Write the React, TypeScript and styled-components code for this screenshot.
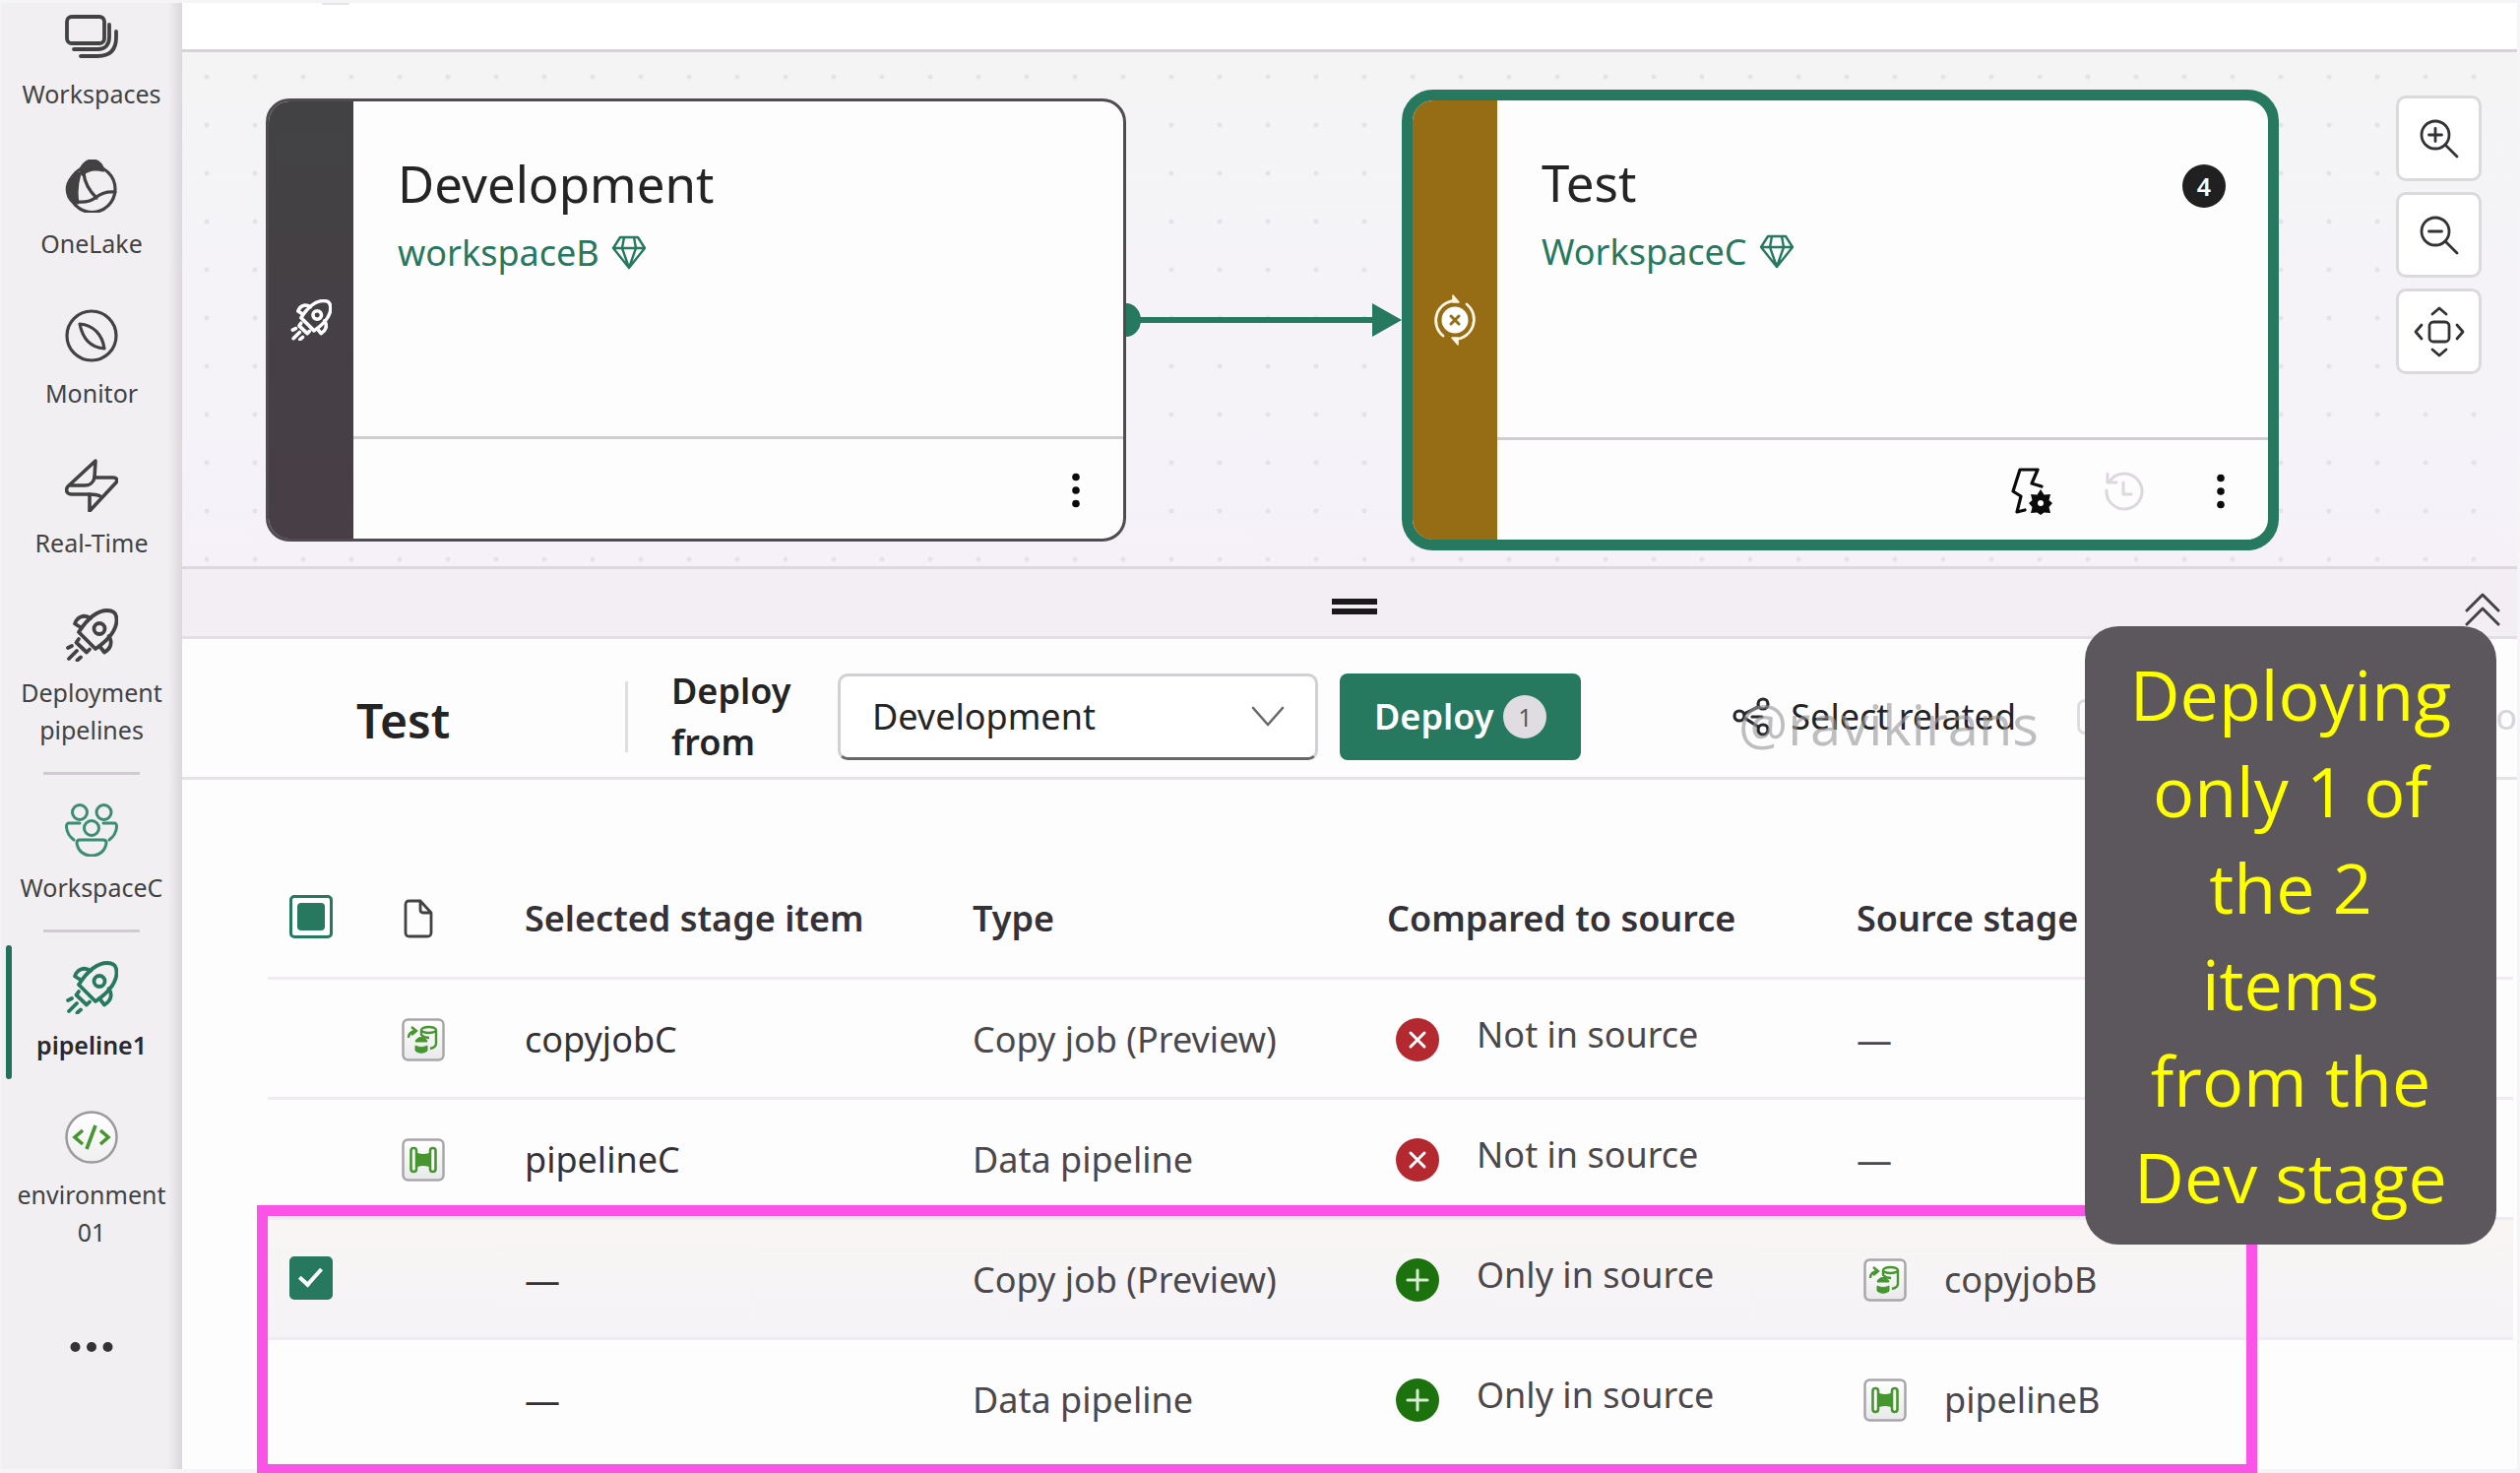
import React, { useState } from "react";
import styled, { createGlobalStyle, css } from "styled-components";

const color = {
  green: "#26785f",
  greenDark: "#1f7159",
  text: "#242424",
  textSoft: "#4b484c",
  line: "#dcd8de",
  rowLine: "#efebf0",
  rail: "#f1eff2",
  strip: "#f5f4f6",
};

const GlobalStyle = createGlobalStyle`
  *, *::before, *::after { box-sizing: border-box; }
  body {
    margin: 0;
    background: ${color.strip};
    color: ${color.text};
    font-family: "Noto Sans", "Open Sans", sans-serif;
  }
  button, select, input { font: inherit; color: inherit; margin: 0; }
  button { cursor: pointer; }
  svg { display: block; flex: none; }
`;

/* ---------- Shell ---------- */

const Shell = styled.div`
  position: relative;
  display: flex;
  min-height: 100vh;
  padding: 3px 3px 4px 1px;
`;

const Rail = styled.nav`
  flex: none;
  width: 184px;
  background: linear-gradient(to right, transparent 170px, #dbd7dc 184px), ${color.rail};
`;

const RailLink = styled.a<{ $first?: boolean; $active?: boolean }>`
  position: relative;
  display: flex;
  flex-direction: column;
  align-items: center;
  gap: 12px;
  padding: ${(p) => (p.$first ? "7px" : "24px")} 15px 24px;
  color: ${(p) => (p.$active ? "#2a282c" : "#424242")};
  font-size: 25px;
  line-height: 38px;
  font-weight: ${(p) => (p.$active ? 600 : 400)};
  text-align: center;
  text-decoration: none;

  ${(p) =>
    p.$active &&
    css`
      &::before {
        content: "";
        position: absolute;
        left: 5px;
        top: 8px;
        bottom: 8px;
        width: 6px;
        border-radius: 3px;
        background: ${color.greenDark};
      }
    `}
`;

const RailLabel = styled.span`
  white-space: pre-line;
`;

const RailDivider = styled.hr`
  width: 98px;
  height: 3px;
  margin: 0 43px 5px;
  border: 0;
  background: #cfcbd0;
`;

const RailMore = styled.button`
  display: flex;
  justify-content: center;
  width: 100%;
  margin-top: 60px;
  padding: 8px 0;
  border: 0;
  background: none;
`;

const Main = styled.main`
  flex: 1;
  min-width: 0;
  background: #fefdfe;
`;

const TopBar = styled.header`
  height: 50px;
  padding-left: 142px;
  background: #fff;
  border-bottom: 3px solid #d6d4d6;
`;

const TopTab = styled.div`
  width: 28px;
  height: 2px;
  border-radius: 0 0 4px 4px;
  background: #e6e4e6;
`;

/* ---------- Canvas ---------- */

const Canvas = styled.section`
  display: flex;
  align-items: center;
  padding: 38px 36px 16px 85px;
  border-bottom: 3px solid ${color.line};
  background:
    radial-gradient(circle at 25px 25px, #e6e3e8 2px, transparent 3px) 0 0 / 49px 49px,
    linear-gradient(#f4f4f4, #f5f3f8 45%, #f6f1f8);
`;

const Stage = styled.article<{ $selected?: boolean }>`
  display: flex;
  flex: none;
  overflow: hidden;
  width: ${(p) => (p.$selected ? "891px" : "874px")};
  height: ${(p) => (p.$selected ? "468px" : "450px")};
  border: ${(p) => (p.$selected ? `11px solid ${color.green}` : "3px solid #4f4b50")};
  border-radius: ${(p) => (p.$selected ? "32px" : "24px")};
  background: #fefdfe;
`;

const StageBand = styled.div<{ $tone: string }>`
  display: flex;
  flex: none;
  align-items: center;
  justify-content: center;
  width: 86px;
  background: ${(p) => p.$tone};
`;

const StageBody = styled.div`
  display: flex;
  flex: 1;
  flex-direction: column;
`;

const StageInfo = styled.div`
  position: relative;
  flex: 1;
  padding: 48px 45px;
`;

const StageTitle = styled.h2`
  margin: 0;
  font-size: 51px;
  font-weight: 400;
  line-height: 70px;
`;

const StageWorkspace = styled.a`
  display: inline-flex;
  align-items: center;
  gap: 12px;
  color: ${color.green};
  font-size: 36px;
  line-height: 72px;
  text-decoration: none;
`;

const StageCount = styled.span`
  position: absolute;
  top: 65px;
  right: 43px;
  width: 44px;
  height: 44px;
  border-radius: 50%;
  background: #202020;
  color: #fff;
  font-size: 25px;
  font-weight: 600;
  line-height: 44px;
  text-align: center;
`;

const StageFooter = styled.footer`
  display: flex;
  align-items: center;
  justify-content: flex-end;
  gap: 52px;
  height: 104px;
  padding: 2px 23px 0;
  border-top: 3px solid #d0ced1;
`;

const IconButton = styled.button`
  padding: 0;
  border: 0;
  background: none;
`;

const CanvasTools = styled.div`
  display: flex;
  flex-direction: column;
  align-self: flex-start;
  gap: 11px;
  margin: 6px 0 0 auto;
`;

const ToolButton = styled.button`
  display: flex;
  align-items: center;
  justify-content: center;
  width: 87px;
  height: 87px;
  padding: 0;
  border: 3px solid #dbd9dc;
  border-radius: 10px;
  background: #fff;
`;

const Splitter = styled.div`
  position: relative;
  display: flex;
  align-items: center;
  justify-content: center;
  height: 71px;
  padding: 8px 0 0 10px;
  border-bottom: 3px solid #e3dfe5;
  background: #f2eef4;
`;

const SplitterGrip = styled.span`
  width: 46px;
  height: 16px;
  border: solid #1b181c;
  border-width: 6px 0;
`;

const CollapseButton = styled(IconButton)`
  position: absolute;
  right: 17px;
  top: 24px;
`;

/* ---------- Deploy bar ---------- */

const DeployBar = styled.section`
  position: relative;
  display: flex;
  align-items: center;
  height: 143px;
  padding: 18px 0 0 177px;
  border-bottom: 3px solid #e6e2e8;
  font-size: 36px;
  line-height: 52px;
`;

const DeployStage = styled.h3`
  width: 276px;
  margin: 0;
  padding-top: 8px;
  border-right: 3px solid #e1dee3;
  font-size: 48px;
  font-weight: 600;
  line-height: 64px;
`;

const DeployLabel = styled.label`
  width: 168px;
  padding-left: 44px;
  font-weight: 600;
`;

const SelectBox = styled.div`
  display: grid;
  align-items: center;
  width: 488px;
  margin: 0 22px 0 45px;

  > * { grid-area: 1 / 1; }
  > svg { justify-self: end; margin-right: 34px; pointer-events: none; }
`;

const Select = styled.select`
  width: 100%;
  height: 88px;
  padding: 0 80px 0 32px;
  border: 3px solid #d3d0d5;
  border-bottom-color: #6a676c;
  border-radius: 10px;
  background: #fff;
  appearance: none;
`;

const DeployButton = styled.button`
  display: flex;
  align-items: center;
  gap: 10px;
  height: 88px;
  padding: 0 35px;
  border: 0;
  border-radius: 8px;
  background: ${color.green};
  color: #fff;
  font-weight: 600;
`;

const DeployCount = styled.span`
  width: 44px;
  height: 44px;
  border-radius: 50%;
  background: #dfdde1;
  color: #5b585d;
  font-size: 25px;
  font-weight: 400;
  line-height: 44px;
`;

const RelatedButton = styled.button`
  display: flex;
  align-items: center;
  gap: 18px;
  margin: 0 0 0 154px;
  padding: 0;
  border: 0;
  background: none;
`;

const Watermark = styled.span`
  position: absolute;
  left: 1581px;
  top: 50px;
  color: rgba(150, 150, 152, 0.62);
  font-family: "Open Sans", sans-serif;
  font-size: 56px;
  line-height: 72px;
`;

const DiffToggle = styled.label`
  display: flex;
  align-items: center;
  flex: 1;
  justify-content: space-between;
  margin: 0 0 0 62px;
  color: #d8d5da;

  input {
    width: 80px;
    height: 36px;
    border: 3px solid #dfdce1;
    border-radius: 8px;
    appearance: none;
  }
`;

/* ---------- Item table ---------- */

const TableArea = styled.section`
  position: relative;
  margin: 79px 4px 0 87px;
`;

const Table = styled.table`
  width: 100%;
  border-collapse: collapse;
  table-layout: fixed;
  color: ${color.textSoft};
  font-size: 36px;
  line-height: 50px;
`;

const Column = styled.col<{ $width?: number }>`
  width: ${(p) => (p.$width ? `${p.$width}px` : "auto")};
`;

const HeadCell = styled.th`
  height: 119px;
  padding: 4px 0 0;
  border-bottom: 3px solid ${color.rowLine};
  color: #353237;
  font-size: 36px;
  font-weight: 600;
  text-align: left;
`;

const Row = styled.tr<{ $selected?: boolean }>`
  background: ${(p) => (p.$selected ? "linear-gradient(#f8f5f3, #f6f3f8)" : "none")};

  &:last-child td {
    border-bottom-color: transparent;
  }
`;

const Cell = styled.td<{ $strong?: boolean }>`
  height: 122px;
  padding: 4px 0 0;
  border-bottom: 3px solid ${color.rowLine};
  color: ${(p) => (p.$strong ? "#353237" : "inherit")};
  white-space: nowrap;
`;

const CheckCell = styled(Cell)`
  padding: 0 0 0 22px;
`;

const Checkbox = styled.input<{ $mixed?: boolean }>`
  display: block;
  position: relative;
  width: 44px;
  height: 44px;
  border: 3px solid ${color.green};
  border-radius: 5px;
  background: ${(p) => (p.$mixed ? "#fff" : color.green)};
  appearance: none;

  &::after {
    content: "";
    position: absolute;
    ${(p) =>
      p.$mixed
        ? css`
            inset: 5px;
            border-radius: 4px;
            background: ${color.green};
          `
        : css`
            left: 12px;
            top: 4px;
            width: 13px;
            height: 23px;
            border: solid #fff;
            border-width: 0 4px 4px 0;
            transform: rotate(42deg);
          `}
  }
`;

const Status = styled.div`
  display: flex;
  align-items: center;
  gap: 38px;
  padding-left: 9px;
`;

const StatusText = styled.span`
  padding-bottom: 10px;
`;

const SourceItem = styled.div`
  display: flex;
  align-items: center;
  gap: 38px;
  padding-left: 7px;
`;

const HighlightBox = styled.div`
  position: absolute;
  left: -11px;
  right: 260px;
  top: 353px;
  bottom: -15px;
  border: 11px solid #fb52e8;
  pointer-events: none;
`;

const Callout = styled.aside`
  position: absolute;
  top: 636px;
  right: 24px;
  width: 418px;
  padding: 20px;
  border-radius: 34px;
  background: #5b575c;
  color: #ff0;
  font-family: "Open Sans", sans-serif;
  font-size: 70px;
  line-height: 98px;
  text-align: center;
  white-space: pre-line;
`;

/* ---------- Icons ---------- */

type IconProps = { size?: number; stroke?: string; weight?: number };

const line = (stroke: string, weight: number) => ({
  fill: "none",
  stroke,
  strokeWidth: weight,
  strokeLinecap: "round" as const,
  strokeLinejoin: "round" as const,
});

const RocketIcon = ({ size = 54, stroke = "#424242", weight = 3.8 }: IconProps) => (
  <svg width={size} height={size} viewBox="0 0 54 54" aria-hidden="true" {...line(stroke, weight)}>
    <path d="M14 24C23 10 33 2 43 2c7 0 9.500 3 9.500 9.500C52.500 22 44 32 31 41 Z" />
    <circle cx="35" cy="20.500" r="5.500" />
    <path d="M26 10C19 5 12 9 10 15.500l6.500 4M44.500 28C49 35 46 41 40 44.500L35 38" />
    <path d="m14 31-2.500 3.500 10.500 10 3-3" />
    <path d="m3 40 4-2M4 51l8-8M12.500 52.500l3.500-3" />
  </svg>
);

const WorkspacesIcon = () => (
  <svg width="54" height="54" viewBox="0 0 54 54" aria-hidden="true" {...line("#424242", 3.8)}>
    <rect x="2" y="7" width="38" height="27" rx="5" />
    <path d="M45 15v13c0 7-4 12-12 12H9" />
    <path d="M52 22v6c0 13-7 19-19 19H16" />
  </svg>
);

const OneLakeIcon = () => (
  <svg width="54" height="54" viewBox="0 0 54 54" aria-hidden="true" {...line("#424242", 3.2)}>
    <circle cx="27.500" cy="30" r="23.500" />
    <path fill="#424242" d="M16 10C19 4 23 1 28 1s9 4 11 10c-8-2-16-1-21 4ZM13 14C3 19 0 29 4 38c2 4 5 6 9 6-2-10-1-20 2-30Z" />
    <path d="M19 14c1 10 6 18 13 25M13 43c9 1 14-1 19-5s10-6 19-5" />
  </svg>
);

const MonitorIcon = () => (
  <svg width="54" height="54" viewBox="0 0 54 54" aria-hidden="true" {...line("#424242", 3.2)}>
    <circle cx="27" cy="27" r="25" />
    <path d="M15 15c14 1 23 11 25 25-14-1-22-10-25-25Z" />
  </svg>
);

const RealTimeIcon = () => (
  <svg width="54" height="54" viewBox="0 0 54 54" aria-hidden="true" {...line("#424242", 3.6)}>
    <path d="M31 2 3 28c-3 4-1 8 4 8h18v17l27-29c2-3 0-5-3-5H30Z" />
    <path d="M30 19c-1 5-5 8-10 8H6M25 36c3 0 7 0 11 2" />
  </svg>
);

const PeopleIcon = () => (
  <svg width="54" height="54" viewBox="0 0 54 54" aria-hidden="true" {...line("#3a8d72", 3)}>
    <circle cx="15" cy="9" r="7.500" />
    <circle cx="39.500" cy="9" r="7.500" />
    <circle cx="27" cy="25" r="7.500" />
    <path d="M15 20H4c-2 0-2.500 1-2.500 4C2 30 5 34 9 37M39 20h11c2 0 2.500 1 2.500 4-.5 6-3.500 10-7.500 13" />
    <path d="M15 37h24c2 0 3 1 3 3-1 8-7 13-15 13s-14-5-15-13c0-2 1-3 3-3Z" />
  </svg>
);

const EnvironmentIcon = () => (
  <svg width="54" height="54" viewBox="0 0 54 54" aria-hidden="true">
    <defs>
      <linearGradient id="env-fill" x1="0" y1="0" x2="0" y2="1">
        <stop offset="0" stopColor="#fff" />
        <stop offset="1" stopColor="#efefef" />
      </linearGradient>
    </defs>
    <circle cx="27" cy="27" r="25.500" fill="url(#env-fill)" stroke="#9d9a9e" strokeWidth="2.500" />
    <path d="m18 20-8 7 8 7M36 20l8 7-8 7M31 15l-9 24" fill="none" stroke="#46962f" strokeWidth="3.600" />
  </svg>
);

const EllipsisIcon = () => (
  <svg width="44" height="12" viewBox="0 0 44 12" fill="#353237" aria-hidden="true">
    <circle cx="5.500" cy="6" r="5" />
    <circle cx="22" cy="6" r="5" />
    <circle cx="38.500" cy="6" r="5" />
  </svg>
);

const MoreIcon = () => (
  <svg width="50" height="36" viewBox="-10 0 50 36" fill="#0c0b0c" aria-hidden="true">
    <circle cx="15" cy="4.500" r="3.800" />
    <circle cx="15" cy="18" r="3.800" />
    <circle cx="15" cy="31.500" r="3.800" />
  </svg>
);

const DiamondIcon = () => (
  <svg width="36" height="36" viewBox="0 0 36 36" aria-hidden="true" {...line(color.green, 2.4)}>
    <path d="M9 2h18l7 11-16 20L2 13ZM2 13h32M13 2l-2 11 7 20 7-20-2-11" />
  </svg>
);

const SyncIcon = () => (
  <svg width="44" height="52" viewBox="0 0 44 52" aria-hidden="true" {...line("#fff6e4", 2.8)}>
    <circle cx="22" cy="26" r="13.500" fill="#fff" stroke="none" />
    <path d="m18 22 8 8m0-8-8 8" stroke="#966e14" strokeWidth="3" />
    <path d="M10 42A20 20 0 0 1 22 6.500M34 10A20 20 0 0 1 22 45.500" />
    <path d="M20 1v7h6ZM25 51v-7h-6Z" fill="#fff6e4" strokeWidth="1.500" />
  </svg>
);

const BoltGearIcon = () => (
  <svg width="42" height="48" viewBox="0 0 42 48" aria-hidden="true" {...line("#0c0b0c", 3.2)}>
    <path d="M31 19 21 16l6-14H9L2 24l8 5-4 16 8-2" />
    <g stroke="none" fill="#0c0b0c">
      <path d="m30 22 3.500 5.500L40 27l-1.500 6 3.500 3-3.500 4 1.500 6-6.500-.5L30 48l-3.500-2.500L20 46l1.500-6-3.500-4 3.500-3L20 27l6.500.5Z" />
    </g>
    <circle cx="30" cy="36" r="3" fill="#fff" stroke="none" />
  </svg>
);

const HistoryIcon = () => (
  <svg width="42" height="42" viewBox="0 0 42 42" aria-hidden="true" {...line("#dcd8dd", 3)}>
    <path d="M6 11a18 18 0 1 1-3 9M4 3v9h9M20 12v12h8" />
  </svg>
);

const ZoomIcon = ({ plus }: { plus?: boolean }) => (
  <svg width="40" height="40" viewBox="0 0 40 40" aria-hidden="true" {...line("#353237", 2.8)}>
    <circle cx="16" cy="16" r="14" />
    <path d="m26 26 12 12M9.500 16h13" />
    {plus && <path d="M16 9.500v13" />}
  </svg>
);

const FitIcon = () => (
  <svg width="52" height="52" viewBox="0 0 52 52" aria-hidden="true" {...line("#353237", 2.8)}>
    <rect x="16" y="16" width="20" height="20" rx="4" />
    <path d="m19 8 7-6 7 6M19 44l7 6 7-6M8 19l-6 7 6 7M44 19l6 7-6 7" />
  </svg>
);

const CollapseIcon = () => (
  <svg width="36" height="34" viewBox="0 0 36 34" aria-hidden="true" {...line("#424242", 3)}>
    <path d="M2 18 18 2l16 16M2 32l16-16 16 16" />
  </svg>
);

const ChevronIcon = () => (
  <svg width="34" height="22" viewBox="0 0 34 22" aria-hidden="true" {...line("#6a676c", 2.6)}>
    <path d="m2 2 15 17L32 2" />
  </svg>
);

const RelatedIcon = () => (
  <svg width="41" height="40" viewBox="0 0 41 40" aria-hidden="true" {...line("#2a282c", 3.2)}>
    <circle cx="7" cy="19" r="5" />
    <circle cx="31" cy="7" r="5" />
    <circle cx="31" cy="33" r="5" />
    <path d="m12 17 14-7M12 21l14 9M20 20h10" />
  </svg>
);

const FileIcon = () => (
  <svg width="32" height="40" viewBox="-2 0 32 40" aria-hidden="true" {...line("#424242", 2.8)}>
    <path d="M6 2h11l11 12v20c0 3-1 4-4 4H6c-3 0-4-1-4-4V6c0-3 1-4 4-4ZM17 2v9c0 2 1 3 3 3h8" />
  </svg>
);

type ItemKind = "copyjob" | "pipeline";

const ItemIcon = ({ kind }: { kind: ItemKind }) => (
  <svg width="44" height="44" viewBox="0 0 44 44" aria-hidden="true">
    <defs>
      <linearGradient id={`item-${kind}`} x1="0" y1="0" x2="0" y2="1">
        <stop offset="0" stopColor="#fff" />
        <stop offset="1" stopColor="#e9e8ea" />
      </linearGradient>
    </defs>
    <rect x="1.500" y="1.500" width="41" height="41" rx="5" fill={`url(#item-${kind})`} stroke="#a9a6ab" strokeWidth="2.500" />
    {kind === "copyjob" ? (
      <g fill="none" stroke="#46962f" strokeWidth="2.400">
        <ellipse cx="27.500" cy="12" rx="7.500" ry="3" />
        <path d="M35 12v14c0 2-2 4-6 5M20 12v5c2 2 5 3 8 3" />
        <path d="M7 20c0-4 2-6 6-7M10 9l5 4-5 4" />
        <path d="M14 24c1-6 11-6 12 0ZM14 28c4 2 8 2 12 0v5c-3 3-9 3-12 0Z" fill="#46962f" strokeWidth="1" />
      </g>
    ) : (
      <g fill="#fff" stroke="#46962f" strokeWidth="2.600">
        <path d="M13 13c4 4 14 4 18 0v18c-4-4-14-4-18 0Z" fill="#46962f" stroke="none" />
        <rect x="9.500" y="10" width="5.500" height="24" rx="2.700" />
        <rect x="29" y="10" width="5.500" height="24" rx="2.700" />
      </g>
    )}
  </svg>
);

const StatusIcon = ({ missing }: { missing: boolean }) => (
  <svg width="44" height="44" viewBox="0 0 44 44" aria-hidden="true">
    <circle cx="22" cy="22" r="22" fill={missing ? "#b4292f" : "#1c720d"} />
    <path
      d={missing ? "m15 15 14 14m0-14L15 29" : "M22 12v20M12 22h20"}
      stroke={missing ? "#fff" : "#d5ecd0"}
      strokeWidth="3"
      strokeLinecap="round"
    />
  </svg>
);

const Connector = () => (
  <svg width="280" height="34" viewBox="0 0 280 34" aria-hidden="true" fill={color.green}>
    <path d="M0 0a15 17 0 0 1 0 34Z" />
    <path d="M10 14h242v6H10ZM250 0l30 17-30 17Z" />
  </svg>
);

/* ---------- Data ---------- */

type Item = {
  name?: string;
  kind: ItemKind;
  type: string;
  status: string;
  source?: string;
  selected?: boolean;
};

const items: Item[] = [
  { name: "copyjobC", kind: "copyjob", type: "Copy job (Preview)", status: "Not in source" },
  { name: "pipelineC", kind: "pipeline", type: "Data pipeline", status: "Not in source" },
  { kind: "copyjob", type: "Copy job (Preview)", status: "Only in source", source: "copyjobB", selected: true },
  { kind: "pipeline", type: "Data pipeline", status: "Only in source", source: "pipelineB" },
];

const RailItem = ({ icon, label, ...rest }: { icon: React.ReactNode; label: string; $first?: boolean; $active?: boolean }) => (
  <RailLink href="#" {...rest}>
    {icon}
    <RailLabel>{label}</RailLabel>
  </RailLink>
);

export default function App() {
  const [source, setSource] = useState("Development");

  return (
    <>
      <GlobalStyle />
      <Shell>
        <Rail aria-label="Main">
          <RailItem $first icon={<WorkspacesIcon />} label="Workspaces" />
          <RailItem icon={<OneLakeIcon />} label="OneLake" />
          <RailItem icon={<MonitorIcon />} label="Monitor" />
          <RailItem icon={<RealTimeIcon />} label="Real-Time" />
          <RailItem icon={<RocketIcon />} label={"Deployment\npipelines"} />
          <RailDivider />
          <RailItem icon={<PeopleIcon />} label="WorkspaceC" />
          <RailDivider />
          <RailItem $active icon={<RocketIcon stroke={color.green} />} label="pipeline1" />
          <RailItem icon={<EnvironmentIcon />} label={"environment\n01"} />
          <RailMore aria-label="More">
            <EllipsisIcon />
          </RailMore>
        </Rail>

        <Main>
          <TopBar>
            <TopTab />
          </TopBar>
          <Canvas>
            <Stage>
              <StageBand $tone="linear-gradient(#424244, #483e46)">
                <RocketIcon size={42} stroke="#fff" weight={4.6} />
              </StageBand>
              <StageBody>
                <StageInfo>
                  <StageTitle>Development</StageTitle>
                  <StageWorkspace href="#">
                    workspaceB <DiamondIcon />
                  </StageWorkspace>
                </StageInfo>
                <StageFooter>
                  <IconButton aria-label="More options">
                    <MoreIcon />
                  </IconButton>
                </StageFooter>
              </StageBody>
            </Stage>
            <Connector />
            <Stage $selected>
              <StageBand $tone="#966d14">
                <SyncIcon />
              </StageBand>
              <StageBody>
                <StageInfo>
                  <StageTitle>Test</StageTitle>
                  <StageWorkspace href="#">
                    WorkspaceC <DiamondIcon />
                  </StageWorkspace>
                  <StageCount>4</StageCount>
                </StageInfo>
                <StageFooter>
                  <IconButton aria-label="Deployment rules">
                    <BoltGearIcon />
                  </IconButton>
                  <IconButton aria-label="Deployment history" disabled>
                    <HistoryIcon />
                  </IconButton>
                  <IconButton aria-label="More options">
                    <MoreIcon />
                  </IconButton>
                </StageFooter>
              </StageBody>
            </Stage>
            <CanvasTools>
              <ToolButton aria-label="Zoom in">
                <ZoomIcon plus />
              </ToolButton>
              <ToolButton aria-label="Zoom out">
                <ZoomIcon />
              </ToolButton>
              <ToolButton aria-label="Fit to screen">
                <FitIcon />
              </ToolButton>
            </CanvasTools>
          </Canvas>

          <Splitter>
            <SplitterGrip />
            <CollapseButton aria-label="Collapse">
              <CollapseIcon />
            </CollapseButton>
          </Splitter>

          <DeployBar>
            <DeployStage>Test</DeployStage>
            <DeployLabel htmlFor="deploy-from">Deploy from</DeployLabel>
            <SelectBox>
              <Select id="deploy-from" value={source} onChange={(e) => setSource(e.target.value)}>
                <option>Development</option>
              </Select>
              <ChevronIcon />
            </SelectBox>
            <DeployButton>
              Deploy <DeployCount>1</DeployCount>
            </DeployButton>
            <RelatedButton>
              <RelatedIcon />
              Select related
            </RelatedButton>
            <DiffToggle>
              <input type="checkbox" disabled />o
            </DiffToggle>
            <Watermark>@ravikirans</Watermark>
          </DeployBar>

          <TableArea>
            <Table>
              <colgroup>
                <Column $width={136} />
                <Column $width={125} />
                <Column $width={455} />
                <Column $width={421} />
                <Column $width={477} />
                <Column />
              </colgroup>
              <thead>
                <tr>
                  <HeadCell as={CheckCell}>
                    <Checkbox type="checkbox" aria-label="Select all" $mixed />
                  </HeadCell>
                  <HeadCell>
                    <FileIcon />
                  </HeadCell>
                  <HeadCell>Selected stage item</HeadCell>
                  <HeadCell>Type</HeadCell>
                  <HeadCell>Compared to source</HeadCell>
                  <HeadCell>Source stage</HeadCell>
                </tr>
              </thead>
              <tbody>
                {items.map((item, i) => (
                  <Row key={i} $selected={item.selected}>
                    <CheckCell>
                      {item.selected && <Checkbox type="checkbox" defaultChecked aria-label={`Select ${item.source}`} />}
                    </CheckCell>
                    <Cell>{item.name && <ItemIcon kind={item.kind} />}</Cell>
                    <Cell $strong>{item.name ?? "—"}</Cell>
                    <Cell>{item.type}</Cell>
                    <Cell>
                      <Status>
                        <StatusIcon missing={!item.source} />
                        <StatusText>{item.status}</StatusText>
                      </Status>
                    </Cell>
                    <Cell>
                      {item.source ? (
                        <SourceItem>
                          <ItemIcon kind={item.kind} />
                          {item.source}
                        </SourceItem>
                      ) : (
                        "—"
                      )}
                    </Cell>
                  </Row>
                ))}
              </tbody>
            </Table>
            <HighlightBox />
          </TableArea>
        </Main>

        <Callout>{"Deploying\nonly 1 of\nthe 2\nitems\nfrom the\nDev stage"}</Callout>
      </Shell>
    </>
  );
}
